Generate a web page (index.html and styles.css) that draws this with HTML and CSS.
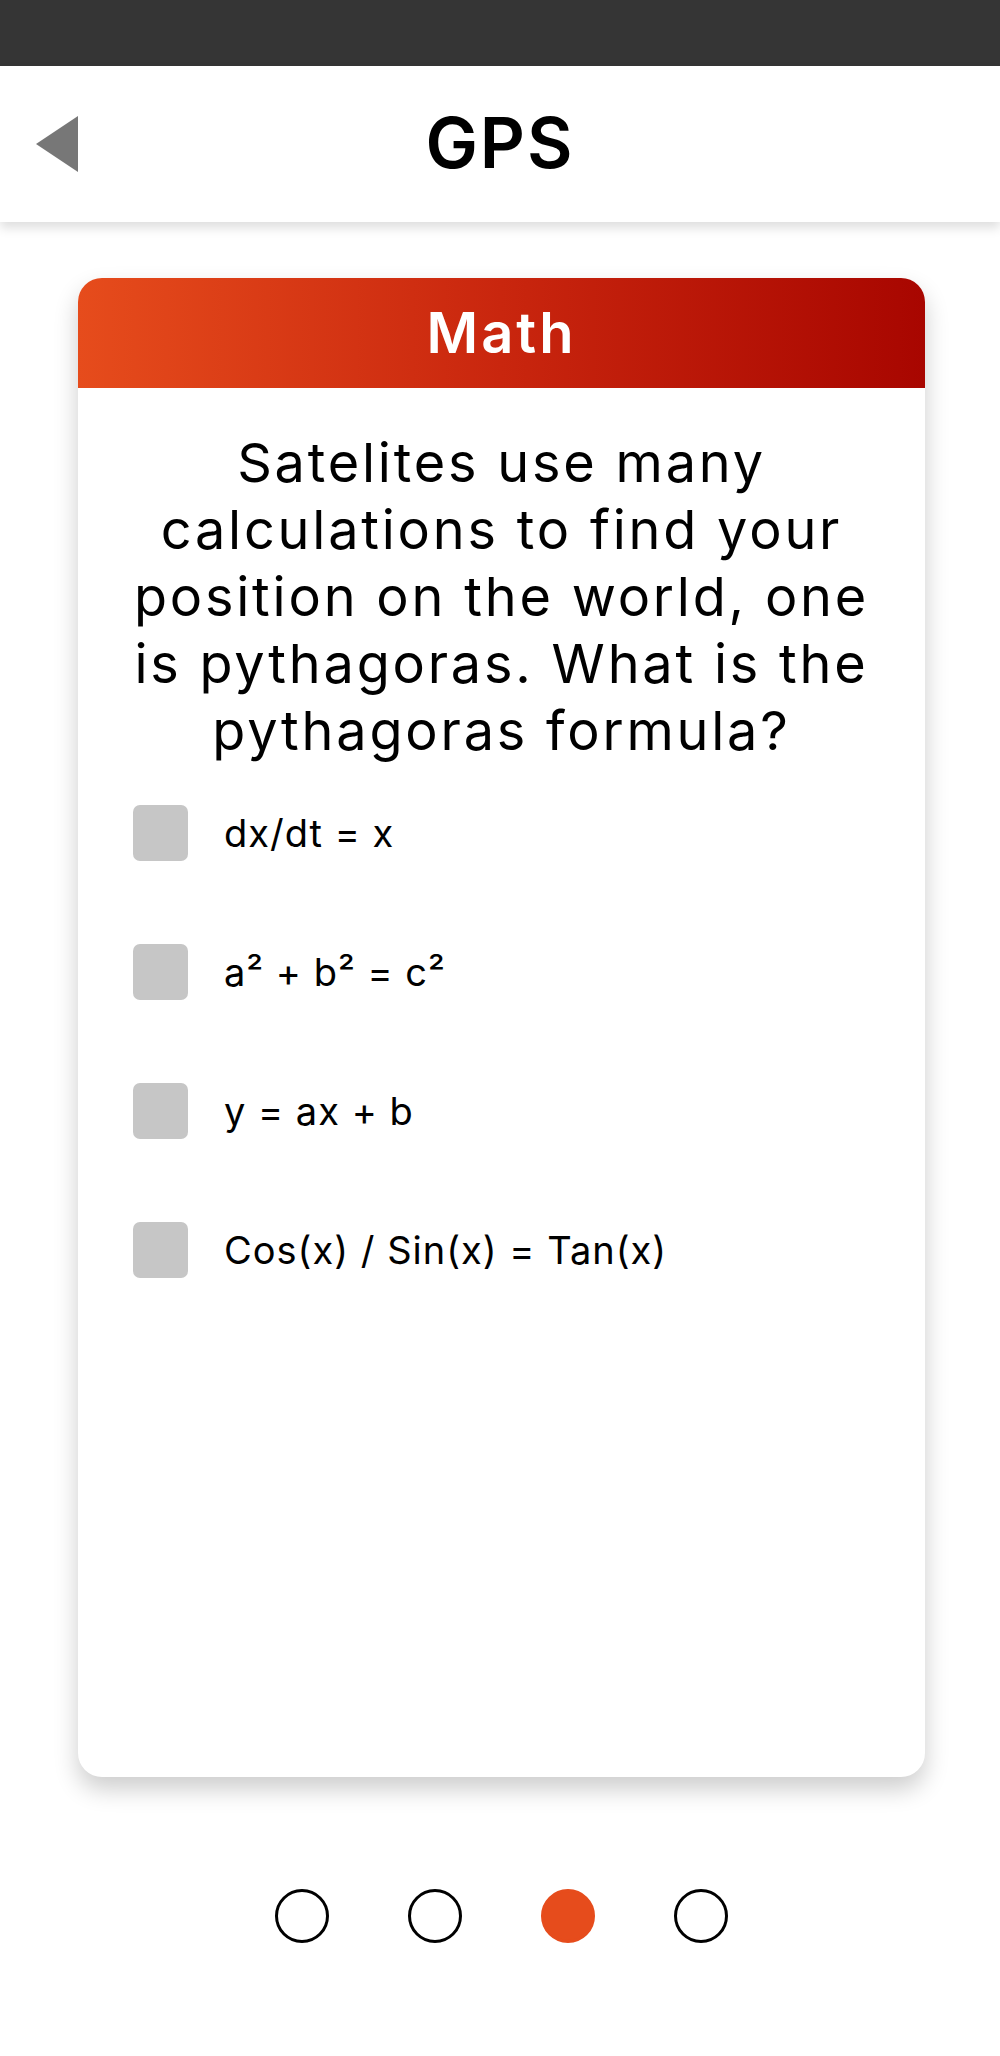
FILE: index.html
```html
<!DOCTYPE html>
<html>
<head>
<meta charset="utf-8">
<link rel="stylesheet" href="styles.css">
</head>
<body>
<div class="statusbar"></div>
<header class="appbar">
  <div class="appbar-left">
    <svg class="back" width="42" height="56" viewBox="0 0 42 56"><polygon points="0,28 42,0 42,56" fill="#777777"/></svg>
  </div>
  <h1 class="title">GPS</h1>
  <div class="appbar-right"></div>
</header>
<main class="content">
  <section class="card">
    <div class="card-head">Math</div>
    <div class="card-body">
      <p class="question">Satelites use many<br>calculations to find your<br>position on the world, one<br>is pythagoras. What is the<br>pythagoras formula?</p>
      <ul class="options">
        <li class="option"><span class="box"></span><span class="label">dx/dt = x</span></li>
        <li class="option"><span class="box"></span><span class="label">a² + b² = c²</span></li>
        <li class="option"><span class="box"></span><span class="label">y = ax + b</span></li>
        <li class="option"><span class="box"></span><span class="label">Cos(x) / Sin(x) = Tan(x)</span></li>
      </ul>
    </div>
  </section>
  <nav class="dots">
    <span class="dot"></span>
    <span class="dot"></span>
    <span class="dot active"></span>
    <span class="dot"></span>
  </nav>
</main>
</body>
</html>
```
FILE: styles.css
```css
* { box-sizing: border-box; }
html, body { margin: 0; padding: 0; }
body {
  width: 1000px;
  height: 2056px;
  background: #ffffff;
  font-family: Inter, "Open Sans", "DejaVu Sans", sans-serif;
  color: #000;
  overflow: hidden;
}
.statusbar {
  height: 66px;
  background: #353535;
}
.appbar {
  height: 156px;
  background: #fff;
  display: grid;
  grid-template-columns: 1fr auto 1fr;
  align-items: center;
  box-shadow: 0 6px 10px rgba(0,0,0,0.13);
  position: relative;
  z-index: 1;
}
.appbar-left {
  padding-left: 36px;
  display: flex;
  align-items: center;
}
.back { display: block; }
.title {
  margin: 0;
  font-size: 70px;
  font-weight: 600;
  letter-spacing: 2px;
  line-height: 1;
  padding-bottom: 2px;
}
.content {
  padding: 56px 75px 0 78px;
}
.card {
  height: 1499px;
  border-radius: 24px;
  background: #fff;
  box-shadow: 0 12px 24px rgba(0,0,0,0.2);
  overflow: hidden;
}
.card-head {
  height: 110px;
  background: linear-gradient(90deg, #e64c1c 0%, #c9260e 50%, #a80600 100%);
  color: #fff;
  font-size: 56px;
  font-weight: 600;
  letter-spacing: 3px;
  display: flex;
  align-items: center;
  justify-content: center;
}
.card-body {
  padding: 41px 55px 0 55px;
}
.question {
  margin: 0;
  text-align: center;
  font-size: 54px;
  line-height: 67px;
  letter-spacing: 2.8px;
  font-weight: 400;
}
.options {
  list-style: none;
  margin: 41px 0 0 0;
  padding: 0;
  display: flex;
  flex-direction: column;
  gap: 83px;
}
.option {
  display: flex;
  align-items: center;
  height: 56px;
  gap: 36px;
}
.box {
  width: 55px;
  height: 56px;
  border-radius: 7px;
  background: #c6c6c6;
  flex: none;
}
.label {
  font-size: 38px;
  letter-spacing: 1px;
}
.dots {
  display: flex;
  justify-content: center;
  gap: 79px;
  margin-top: 112px;
}
.dot {
  width: 54px;
  height: 54px;
  border-radius: 50%;
  border: 3px solid #000;
}
.dot.active {
  background: #e64c1c;
  border-color: #e64c1c;
}
```
